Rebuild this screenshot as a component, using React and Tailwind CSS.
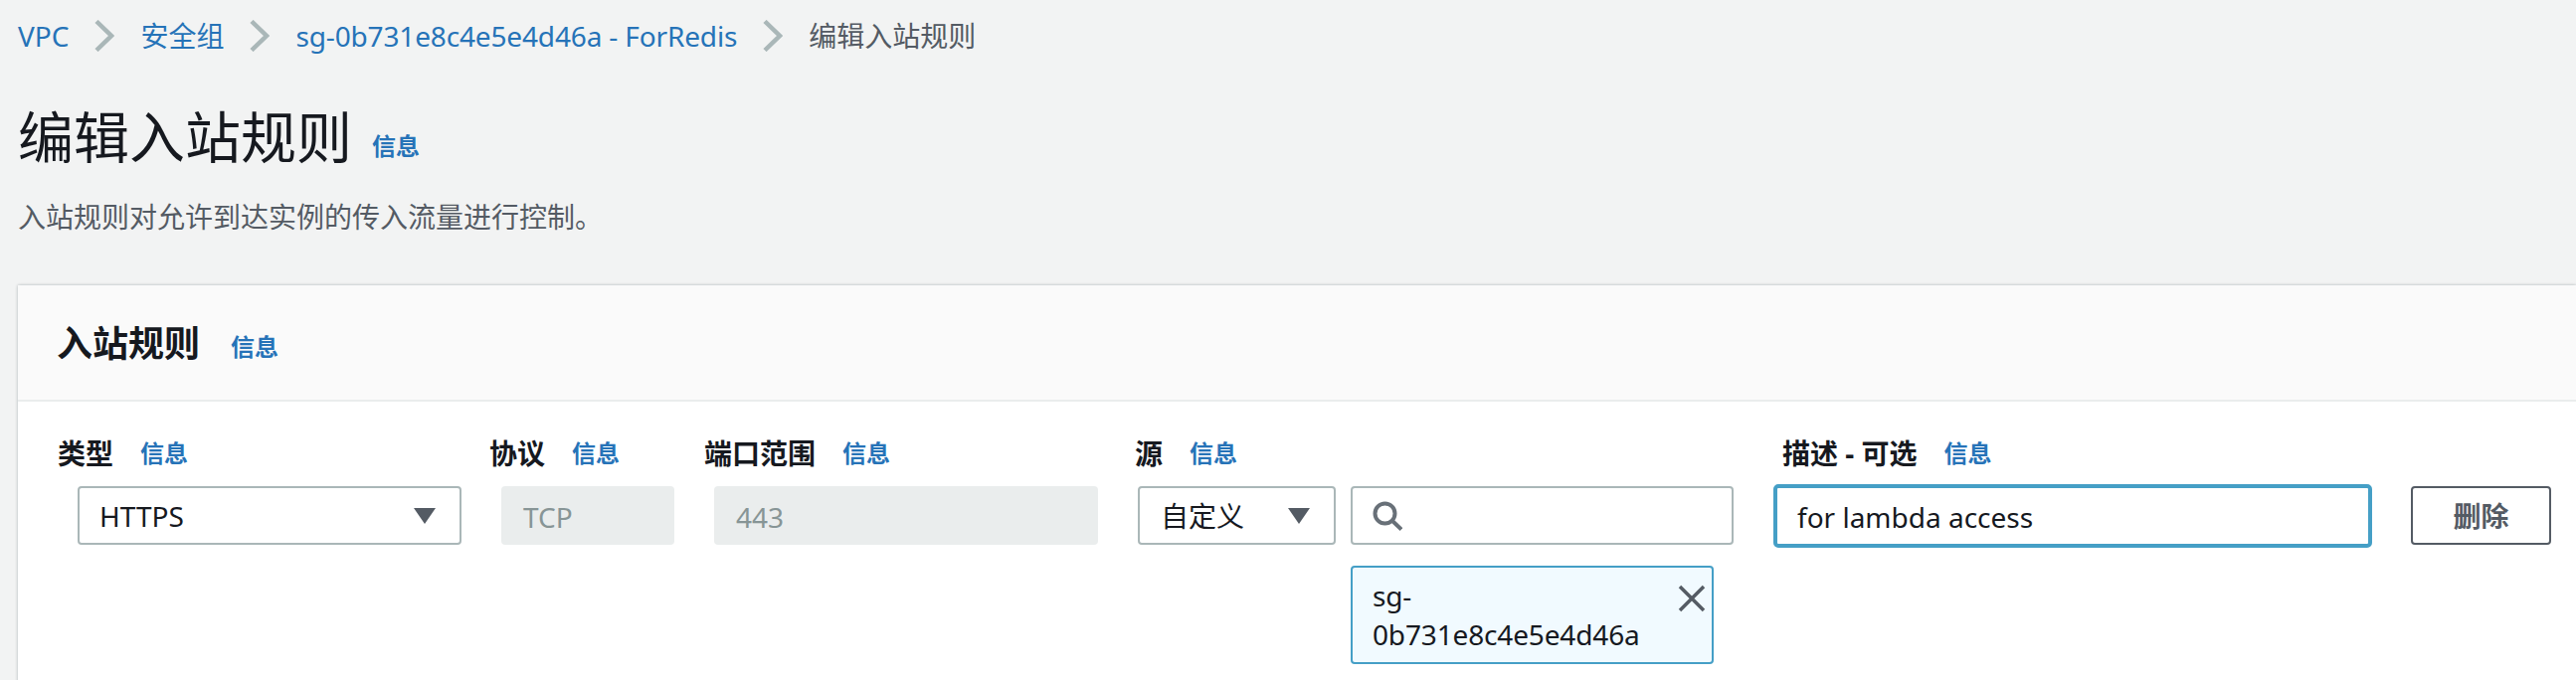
const font = { fontFamily: '"Noto Sans", "Noto Sans CJK SC", sans-serif' };

function Info({ className = "" }) {
  return <span className={`text-[24px] leading-[32px] font-semibold text-[#2673b8] ${className}`}>信息</span>;
}

function Chevron() {
  return (
    <svg width="20" height="32" viewBox="0 0 20 32" className="mx-[26px] shrink-0" fill="none">
      <path d="M2 1.5 L17 16 L2 30.5" stroke="#aab7b8" strokeWidth="4.5" />
    </svg>
  );
}

function Caret() {
  return (
    <svg width="24" height="16" viewBox="0 0 24 16" className="shrink-0">
      <path d="M1 0 H23 L12 16 Z" fill="#545b64" />
    </svg>
  );
}

function Label({ text, w }) {
  return (
    <div className={`flex items-center gap-[27px] ${w}`}>
      <span className="text-[28px] leading-[36px] font-bold text-[#16191f]">{text}</span>
      <Info />
    </div>
  );
}

export default function App() {
  return (
    <div style={font} className="h-[684px] w-[2590px] overflow-hidden bg-[#f2f3f3] antialiased">
      <nav className="flex h-[72px] items-center pl-[18px] text-[28px] text-[#2673b8]">
        <span>VPC</span>
        <Chevron />
        <span>安全组</span>
        <Chevron />
        <span className="tracking-[-0.15px]">sg-0b731e8c4e5e4d46a - ForRedis</span>
        <Chevron />
        <span className="text-[#545b64]">编辑入站规则</span>
      </nav>
      <div className="mt-[33px] flex items-end pl-[18px]">
        <h1 className="text-[56px] leading-[64px] font-normal text-[#16191f]">编辑入站规则</h1>
        <Info className="mb-[6px] ml-[20px]" />
      </div>
      <p className="mt-[31px] pl-[18px] text-[28px] leading-[36px] text-[#545b64]">入站规则对允许到达实例的传入流量进行控制。</p>

      <section className="ml-[18px] mt-[51px] bg-white shadow-[0_0_3px_rgba(0,28,36,0.3)]">
        <header className="flex h-[117px] items-center border-b-2 border-[#eaeded] bg-[#fafafa] pl-[39px] pt-[3px]">
          <h2 className="text-[36px] leading-[44px] font-bold text-[#16191f]">入站规则</h2>
          <Info className="ml-[31px] mt-[5px]" />
        </header>
        <div className="flex pl-[40px] pt-[34px]">
          <Label text="类型" w="w-[434px]" />
          <Label text="协议" w="w-[216px]" />
          <Label text="端口范围" w="w-[433px]" />
          <Label text="源" w="w-[651px]" />
          <Label text="描述 - 可选" w="w-[600px]" />
        </div>
        <div className="flex items-start pl-[60px] pt-[15px]">
          <div className="flex h-[59px] w-[386px] items-center justify-between rounded-[4px] border-2 border-[#aab7b8] bg-white pl-[20px] pr-[23px] text-[28px] text-[#16191f]">
            HTTPS
            <Caret />
          </div>
          <div className="ml-[40px] flex h-[59px] w-[174px] items-center rounded-[4px] bg-[#eaeded] pl-[22px] pt-[2px] text-[28px] text-[#879596]">TCP</div>
          <div className="ml-[40px] flex h-[59px] w-[386px] items-center rounded-[4px] bg-[#eaeded] pl-[22px] pt-[2px] text-[28px] text-[#879596]">443</div>
          <div className="ml-[40px] flex h-[59px] w-[199px] items-center justify-between rounded-[4px] border-2 border-[#aab7b8] bg-white pl-[21px] pr-[23px] text-[28px] text-[#16191f]">
            自定义
            <Caret />
          </div>
          <div className="ml-[15px] w-[385px]">
            <div className="flex h-[59px] items-center rounded-[4px] border-2 border-[#aab7b8] bg-white pl-[20px]">
              <svg width="30" height="30" viewBox="0 0 30 30" fill="none" stroke="#687078" strokeWidth="4">
                <circle cx="12.5" cy="12.5" r="10" />
                <path d="M19.5 19.5 L29 28.5" />
              </svg>
            </div>
            <div className="mt-[21px] flex h-[99px] w-[365px] items-start justify-between rounded-[4px] border-2 border-[#459fc6] bg-[#f1faff] pl-[20px] pr-[5px] pt-[9px]">
              <span className="w-[280px] break-words text-[28px] leading-[39px] tracking-[-0.15px] text-[#16191f]">sg-<br />0b731e8c4e5e4d46a</span>
              <svg width="30" height="30" viewBox="0 0 30 30" className="mt-[7px] shrink-0" fill="none" stroke="#545b64" strokeWidth="3.5">
                <path d="M3 3 L27 27 M27 3 L3 27" />
              </svg>
            </div>
          </div>
          <div className="ml-[40px] -mt-[2px] flex h-[64px] w-[602px] items-center rounded-[5px] border-4 border-[#459fc6] bg-white pl-[20px] pt-[2px] text-[28px] text-[#16191f]">for lambda access</div>
          <div className="ml-[39px] flex h-[59px] w-[141px] items-center justify-center rounded-[4px] border-2 border-[#545b64] bg-white text-[28px] font-semibold text-[#545b64]">删除</div>
        </div>
        <div className="h-[40px]" />
      </section>
    </div>
  );
}
